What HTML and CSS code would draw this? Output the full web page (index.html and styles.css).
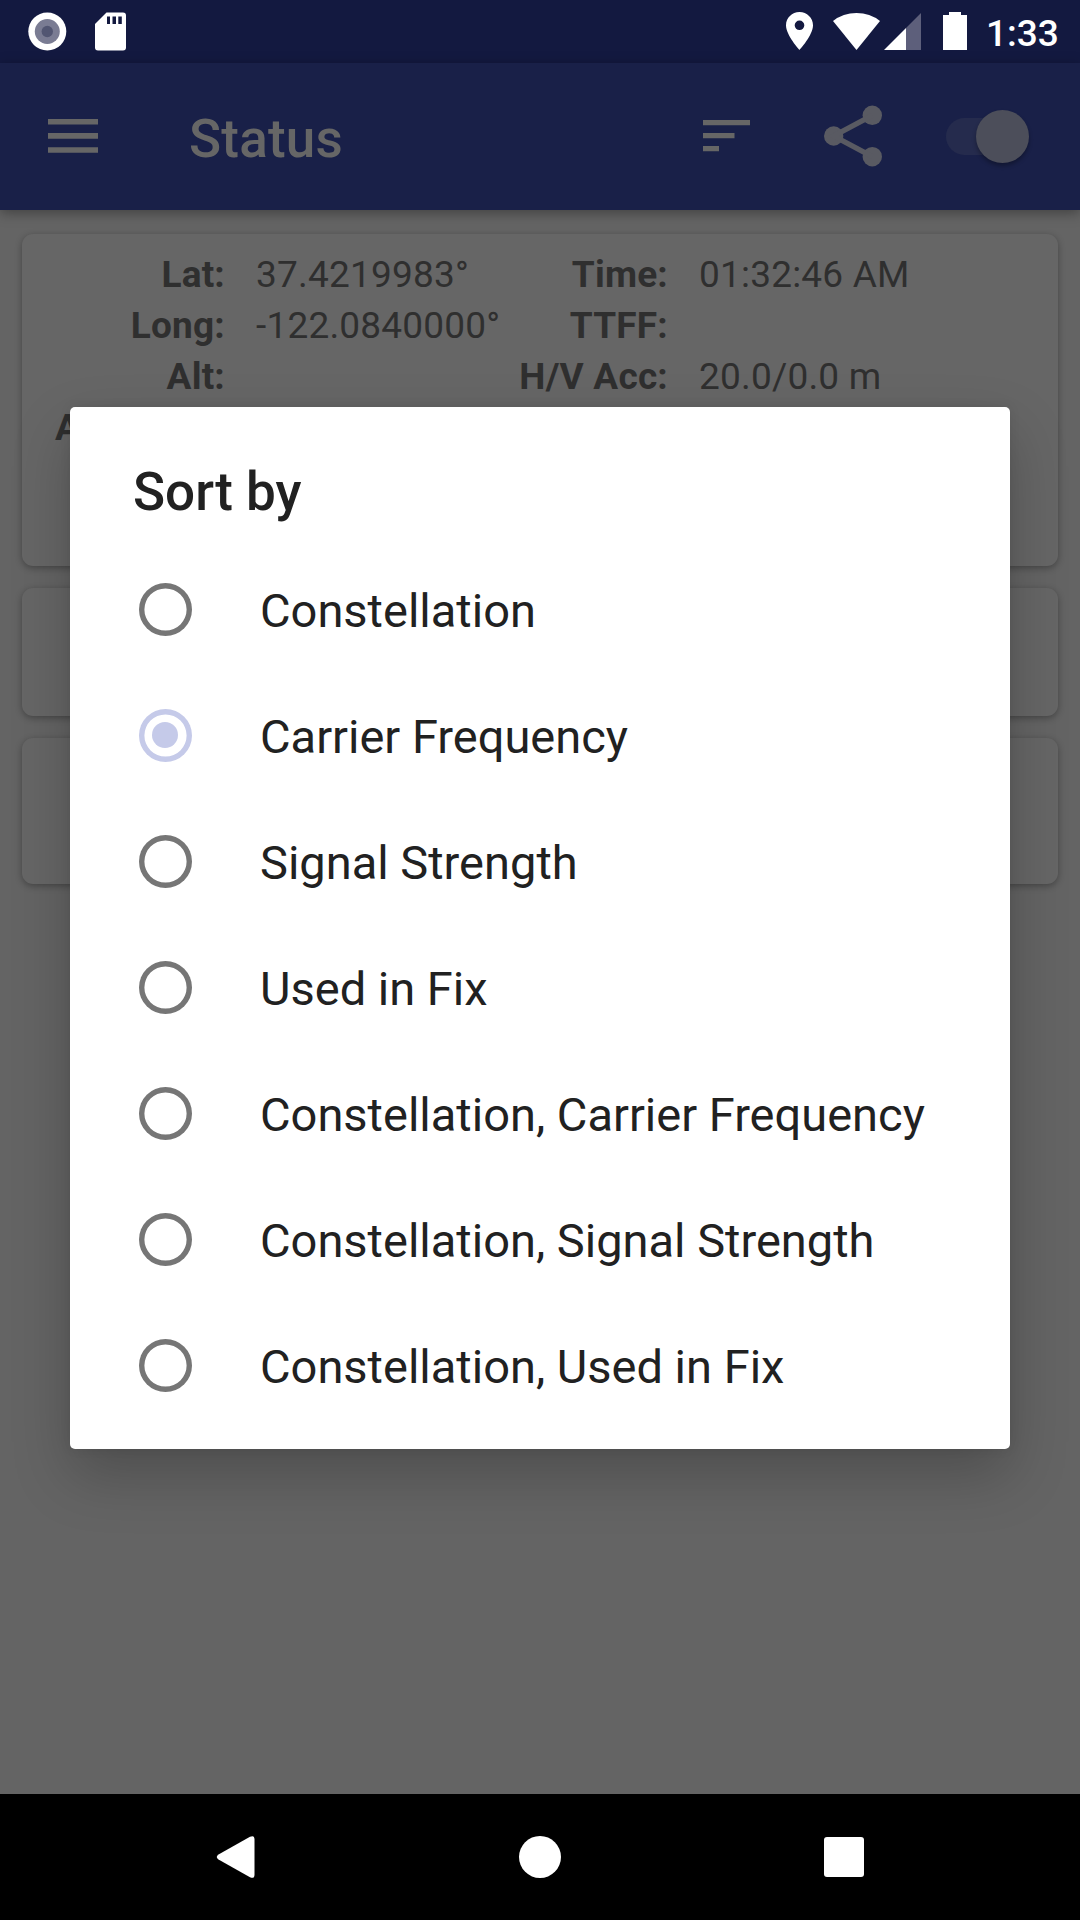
FILE: index.html
```html
<!DOCTYPE html>
<html lang="en">
<head>
<meta charset="utf-8">
<title>Status</title>
<link rel="stylesheet" href="styles.css">
</head>
<body>
<div class="screen">
  <header class="status-bar">
    <svg class="camera" width="40" height="40" viewBox="0 0 40 40"><circle cx="20.300" cy="19.500" r="19" fill="#fff"/><circle cx="20.300" cy="19.500" r="12.500" fill="#7a7c93"/><circle cx="20.300" cy="19.500" r="5.700" fill="#525672"/></svg>
    <svg class="sd-card" width="32" height="40" viewBox="0 0 32 40"><path fill="#fff" d="M11.500 .500H28q3 0 3 3v32q0 3-3 3H3q-3 0-3-3V12z"/><path fill="#131940" d="M12 4.500h3v7.500h-3zM17.500 4.500h3.500v7.500h-3.500zM23.300 4.500h3.500v7.500h-3.500z"/></svg>
    <span class="spacer"></span>
    <svg class="place" width="27" height="38" viewBox="5 2 14 20" preserveAspectRatio="none"><path fill="#fff" d="M12 2C8.130 2 5 5.130 5 9c0 5.250 7 13 7 13s7-7.750 7-13c0-3.870-3.130-7-7-7zm0 9.500a2.500 2.500 0 0 1 0-5 2.500 2.500 0 0 1 0 5z"/></svg>
    <svg class="wifi" width="47" height="38" viewBox="0 0 47 38"><path fill="#fff" d="M23.500 38L0 9Q10 1 23.500 1T47 9z"/></svg>
    <svg class="signal" width="37" height="38" viewBox="0 0 37 38"><path fill="#5d5f7b" d="M22 16L37 1v37H22z"/><path fill="#fff" d="M0 38l22-22v22z"/></svg>
    <svg class="battery" width="24" height="38" viewBox="0 0 24 38"><path fill="#fff" d="M6 0h12v3h6v35H0V3h6z"/></svg>
    <time class="clock">1:33</time>
  </header>

  <nav class="app-bar">
    <svg class="menu" width="50" height="34" viewBox="0 0 50 34"><path fill="#666" d="M0 0h50v5.600H0zM0 14.100h50v5.600H0zM0 28.200h50v5.600H0z"/></svg>
    <h1 class="app-title">Status</h1>
    <svg class="sort" width="48" height="32" viewBox="0 0 48 32"><path fill="#666" d="M0 0h47v5.200H0zM0 13h31.500v5.200H0zM0 26h16v5.300H0z"/></svg>
    <svg class="share" width="60" height="64" viewBox="0 0 60 64"><g fill="#595a62"><circle cx="10.700" cy="32" r="9.700"/><circle cx="49.300" cy="11.300" r="9.700"/><circle cx="49.300" cy="52.700" r="9.700"/></g><path fill="none" stroke="#595a62" stroke-width="5.300" d="M49.300 11.300L10.700 32l38.600 20.700"/></svg>
    <div class="switch"><span class="thumb"></span></div>
  </nav>

  <main class="content">
    <section class="card location">
      <dl class="facts">
        <dt>Lat:</dt><dd>37.4219983°</dd><dt>Time:</dt><dd>01:32:46 AM</dd>
        <dt>Long:</dt><dd>-122.0840000°</dd><dt>TTFF:</dt><dd></dd>
        <dt>Alt:</dt><dd></dd><dt>H/V Acc:</dt><dd>20.0/0.0 m</dd>
        <dt>Alt (MSL):</dt><dd></dd><dt></dt><dd></dd>
      </dl>
    </section>
    <section class="card gnss"></section>
    <section class="card sbas"></section>
  </main>

  <footer class="nav-bar">
    <svg width="44" height="44" viewBox="0 0 44 44"><path fill="#fff" d="M4.500 19.500L36 1.800Q40.500-.3 40.500 4.500v35Q40.500 44.300 36 42.200L4.500 24.500Q1 22 4.500 19.500z"/></svg>
    <svg width="44" height="44" viewBox="0 0 44 44"><circle cx="22" cy="22" r="21" fill="#fff"/></svg>
    <svg width="44" height="44" viewBox="0 0 44 44"><rect x="2" y="2" width="40" height="40" rx="3" fill="#fff"/></svg>
  </footer>

  <div class="dialog" role="dialog">
    <h2 class="dialog-title">Sort by</h2>
    <ul class="options">
      <li><span class="radio"></span>Constellation</li>
      <li><span class="radio checked"></span>Carrier Frequency</li>
      <li><span class="radio"></span>Signal Strength</li>
      <li><span class="radio"></span>Used in Fix</li>
      <li><span class="radio"></span>Constellation, Carrier Frequency</li>
      <li><span class="radio"></span>Constellation, Signal Strength</li>
      <li><span class="radio"></span>Constellation, Used in Fix</li>
    </ul>
  </div>
</div>
</body>
</html>
```

FILE: styles.css
```css
* { box-sizing: border-box; margin: 0; padding: 0; }
body { background: #646464; font-family: Roboto, sans-serif; }
svg { display: block; flex: none; }

.screen {
  position: relative;
  display: flex;
  flex-direction: column;
  width: 1080px;
  height: 1920px;
  overflow: hidden;
  background: #646464;
}

.status-bar {
  display: flex;
  align-items: flex-start;
  height: 63px;
  padding: 12px 22px 0 27px;
  background: #131940;
}
.sd-card { margin-left: 28px; }
.spacer { flex: 1; }
.wifi { margin-left: 20px; }
.signal { margin-left: 4px; }
.battery { margin-left: 22px; }
.clock {
  width: 72px;
  margin-left: 19px;
  font-size: 37px;
  font-weight: 500;
  line-height: 43px;
  color: #fff;
}

.app-bar {
  display: flex;
  align-items: center;
  height: 147px;
  padding: 0 60px 1px 48px;
  background: #192048;
  box-shadow: 0 3px 12px rgba(0, 0, 0, .35);
}
.app-title {
  flex: 1;
  padding: 6px 0 0 91px;
  font-size: 53px;
  font-weight: 500;
  line-height: 62px;
  letter-spacing: .2px;
  color: #666;
}
.share { margin-left: 72px; }
.switch {
  display: flex;
  justify-content: flex-end;
  align-items: center;
  width: 74px;
  height: 37px;
  margin: 1px 0 0 63px;
  border-radius: 19px;
  background: #252b4d;
}
.thumb {
  flex: none;
  width: 53px;
  height: 53px;
  margin-right: -9px;
  border-radius: 50%;
  background: #4c4e5a;
  box-shadow: 0 3px 4px rgba(0, 0, 0, .3);
}

.content {
  flex: 1;
  display: flex;
  flex-direction: column;
  gap: 22px;
  padding: 24px 22px;
}
.card {
  border-radius: 11px;
  background: #666;
  box-shadow: 0 2px 7px rgba(0, 0, 0, .32);
}
.location { height: 332px; padding-top: 15px; }
.gnss { height: 128px; }
.sbas { height: 146px; }

.facts {
  display: grid;
  grid-template-columns: 203px 281px 162px 1fr;
  grid-auto-rows: 51px;
  font-size: 37px;
  line-height: 51px;
  letter-spacing: .2px;
  white-space: nowrap;
  color: #2f2f2f;
}
.facts dt { display: flex; justify-content: flex-end; font-weight: 700; }
.facts dd { padding-left: 31px; }

.nav-bar {
  display: flex;
  justify-content: center;
  align-items: center;
  gap: 260px;
  height: 126px;
  background: #000;
}

.dialog {
  position: absolute;
  left: 70px;
  top: 407px;
  width: 940px;
  height: 1042px;
  padding: 47px 63px 0;
  border-radius: 5px;
  background: #fff;
  color: #212121;
  box-shadow: 0 26px 58px rgba(0, 0, 0, .22), 0 0 12px rgba(0, 0, 0, .08);
}
.dialog-title {
  margin-bottom: 16px;
  font-size: 53px;
  font-weight: 500;
  line-height: 76px;
}
.options { list-style: none; }
.options li {
  display: flex;
  align-items: center;
  height: 126px;
  padding: 4px 0 0 5.500px;
  font-size: 47px;
  line-height: 56px;
  white-space: nowrap;
}
.radio {
  display: grid;
  place-items: center;
  width: 53px;
  height: 53px;
  margin: -4px 68.500px 0 0;
  border-radius: 50%;
  box-shadow: inset 0 0 0 5.400px #767676;
}
.radio.checked { box-shadow: inset 0 0 0 5.400px #c5cae9; }
.radio.checked::before {
  content: "";
  width: 26px;
  height: 26px;
  border-radius: 50%;
  background: #c5cae9;
}
```
